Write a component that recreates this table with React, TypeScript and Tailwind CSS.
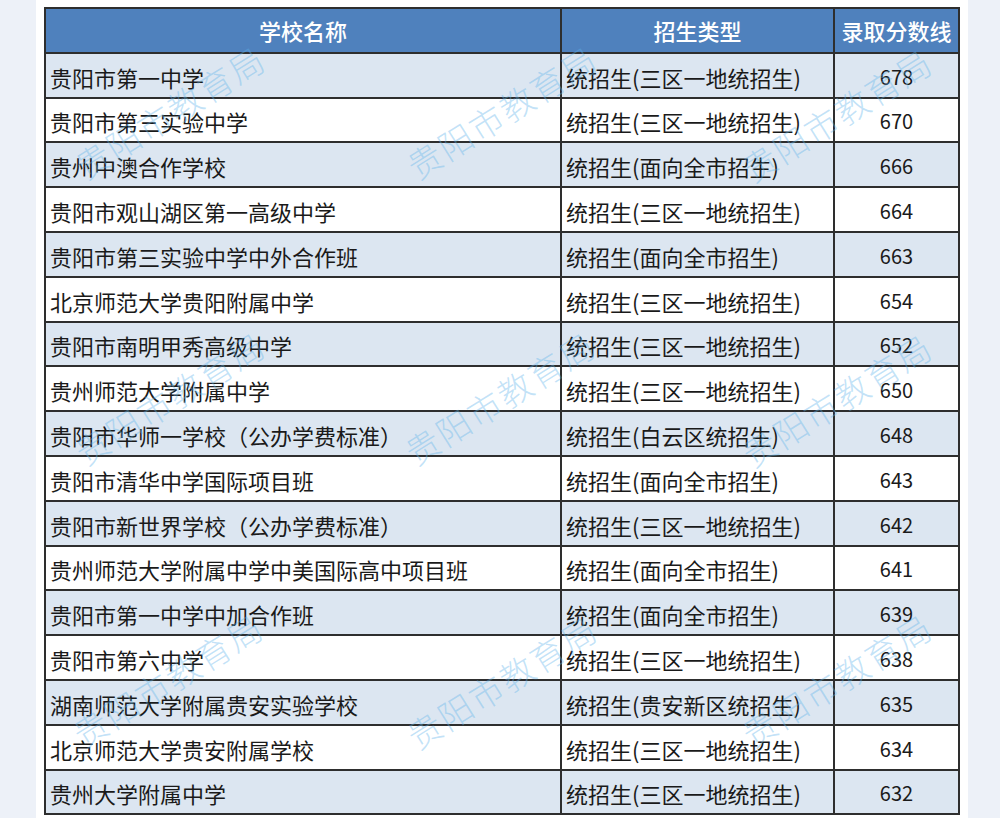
import React from "react";

const rows: [string, string, string][] = [
  ["贵阳市第一中学", "统招生(三区一地统招生)", "678"],
  ["贵阳市第三实验中学", "统招生(三区一地统招生)", "670"],
  ["贵州中澳合作学校", "统招生(面向全市招生)", "666"],
  ["贵阳市观山湖区第一高级中学", "统招生(三区一地统招生)", "664"],
  ["贵阳市第三实验中学中外合作班", "统招生(面向全市招生)", "663"],
  ["北京师范大学贵阳附属中学", "统招生(三区一地统招生)", "654"],
  ["贵阳市南明甲秀高级中学", "统招生(三区一地统招生)", "652"],
  ["贵州师范大学附属中学", "统招生(三区一地统招生)", "650"],
  ["贵阳市华师一学校（公办学费标准）", "统招生(白云区统招生)", "648"],
  ["贵阳市清华中学国际项目班", "统招生(面向全市招生)", "643"],
  ["贵阳市新世界学校（公办学费标准）", "统招生(三区一地统招生)", "642"],
  ["贵州师范大学附属中学中美国际高中项目班", "统招生(面向全市招生)", "641"],
  ["贵阳市第一中学中加合作班", "统招生(面向全市招生)", "639"],
  ["贵阳市第六中学", "统招生(三区一地统招生)", "638"],
  ["湖南师范大学附属贵安实验学校", "统招生(贵安新区统招生)", "635"],
  ["北京师范大学贵安附属学校", "统招生(三区一地统招生)", "634"],
  ["贵州大学附属中学", "统招生(三区一地统招生)", "632"],
];

const marks = [
  "left-[134px] top-[112px]",
  "left-[466px] top-[112px]",
  "left-[801px] top-[115px]",
  "left-[134px] top-[398px]",
  "left-[464px] top-[398px]",
  "left-[801px] top-[400px]",
  "left-[132px] top-[680px]",
  "left-[466px] top-[682px]",
  "left-[801px] top-[680px]",
];

export default function App() {
  return (
    <div className="flex h-[818px] w-full overflow-hidden bg-[#edf1f8] font-['Noto_Sans_CJK_SC','Noto_Sans',sans-serif] text-[#1a1a1a]">
      <div className="w-[36px] shrink-0" />
      <div className="relative w-[932px] shrink-0 bg-white pl-[8px] pt-[7px]">
        <table className="w-[914px] table-fixed border-collapse border-2 border-[#2e2e2e]">
          <colgroup>
            <col className="w-[516px]" />
            <col className="w-[273px]" />
            <col className="w-[125px]" />
          </colgroup>
          <thead>
            <tr className="h-[44.8px] bg-[#4f81bd] text-white">
              <th className="border-2 border-[#2e2e2e] text-center text-[22px] font-medium leading-none">学校名称</th>
              <th className="border-2 border-[#2e2e2e] text-center text-[22px] font-medium leading-none">招生类型</th>
              <th className="border-2 border-[#2e2e2e] text-center text-[22px] font-medium leading-none">录取分数线</th>
            </tr>
          </thead>
          <tbody>
            {rows.map((r, i) => (
              <tr key={i} className={i % 2 === 0 ? "h-[44.8px] bg-[#dce6f1]" : "h-[44.8px] bg-white"}>
                <td className="border-2 border-[#2e2e2e] pl-[4px] pt-[3px] text-left text-[22px] leading-none whitespace-nowrap">{r[0]}</td>
                <td className="border-2 border-[#2e2e2e] pl-[4px] pt-[3px] text-left text-[22px] leading-none whitespace-nowrap">{r[1]}</td>
                <td className="border-2 border-[#2e2e2e] pt-[3px] text-center text-[20px] leading-none">{r[2]}</td>
              </tr>
            ))}
          </tbody>
        </table>
        <div className="pointer-events-none absolute inset-0 overflow-hidden">
          {marks.map((m, i) => (
            <div
              key={i}
              className={`absolute ${m} -translate-x-1/2 -translate-y-1/2 -rotate-[32deg] whitespace-nowrap text-[34px] font-light leading-none tracking-[2px] text-[rgba(95,180,235,0.38)]`}
            >
              贵阳市教育局
            </div>
          ))}
        </div>
      </div>
    </div>
  );
}
